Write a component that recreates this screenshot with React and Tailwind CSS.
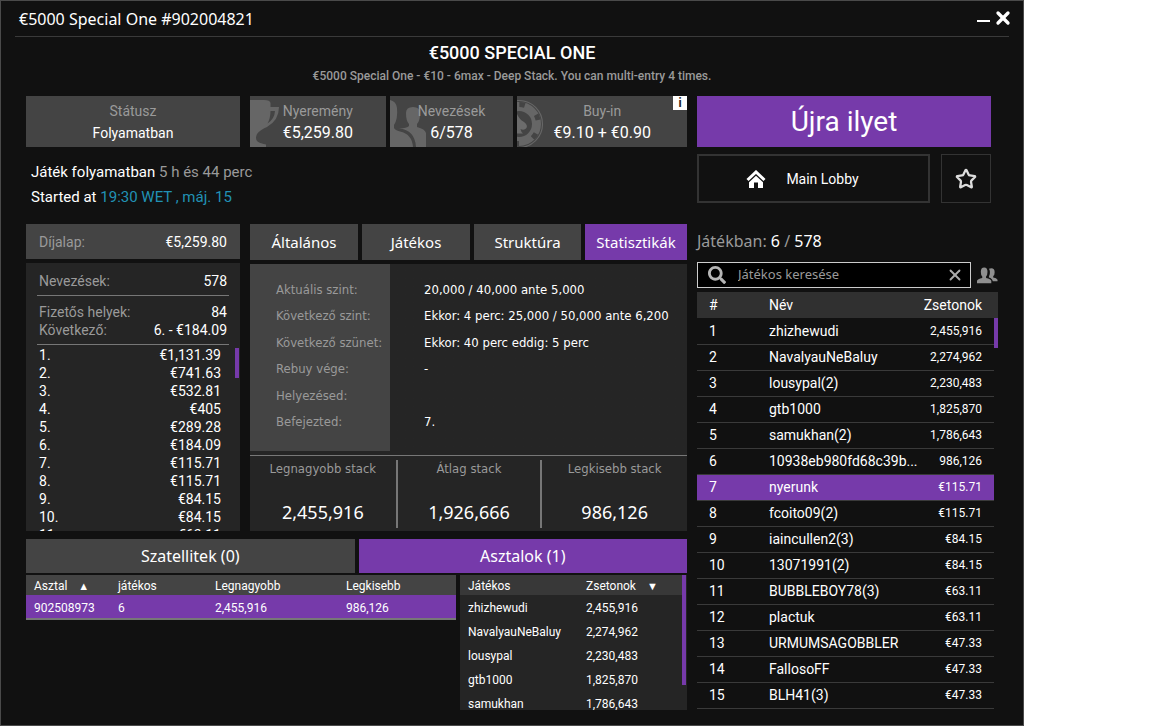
import { useState } from 'react'
import { FaSearch } from 'react-icons/fa'
import { Star, X } from 'lucide-react'

const TABS = ['Általános', 'Játékos', 'Struktúra', 'Statisztikák']

const PRIZES = [
  '€1,131.39',
  '€741.63',
  '€532.81',
  '€405',
  '€289.28',
  '€184.09',
  '€115.71',
  '€115.71',
  '€84.15',
  '€84.15',
  '€63.11',
]

const LEVELS = [
  ['Aktuális szint:', '20,000 / 40,000 ante 5,000'],
  ['Következő szint:', 'Ekkor: 4 perc: 25,000 / 50,000 ante 6,200'],
  ['Következő szünet:', 'Ekkor: 40 perc eddig: 5 perc'],
  ['Rebuy vége:', '-'],
  ['Helyezésed:', ''],
  ['Befejezted:', '7.'],
]

const STACKS = [
  ['Legnagyobb stack', '2,455,916'],
  ['Átlag stack', '1,926,666'],
  ['Legkisebb stack', '986,126'],
]

const TABLE_PLAYERS = [
  ['zhizhewudi', '2,455,916'],
  ['NavalyauNeBaluy', '2,274,962'],
  ['lousypal', '2,230,483'],
  ['gtb1000', '1,825,870'],
  ['samukhan', '1,786,643'],
]

const PLAYERS = [
  ['zhizhewudi', '2,455,916'],
  ['NavalyauNeBaluy', '2,274,962'],
  ['lousypal(2)', '2,230,483'],
  ['gtb1000', '1,825,870'],
  ['samukhan(2)', '1,786,643'],
  ['10938eb980fd68c39b...', '986,126'],
  ['nyerunk', '€115.71'],
  ['fcoito09(2)', '€115.71'],
  ['iaincullen2(3)', '€84.15'],
  ['13071991(2)', '€84.15'],
  ['BUBBLEBOY78(3)', '€63.11'],
  ['plactuk', '€63.11'],
  ['URMUMSAGOBBLER', '€47.33'],
  ['FallosoFF', '€47.33'],
  ['BLH41(3)', '€47.33'],
]

function TrophyArt() {
  return (
    <svg viewBox="0 0 40 51" className="absolute top-0 left-0 h-full" fill="#666" aria-hidden="true">
      <path
        fillRule="evenodd"
        d="M0 4H14Q20 4 20.5 7V11H29Q29 24 17 31Q10 34 7 38Q5 42 7 45Q9 47 16 48.500V51H0ZM20.500 15Q20.500 22 17.500 27.500Q24.500 23 25 15Z"
      />
    </svg>
  )
}

function PeopleArt() {
  return (
    <svg viewBox="0 0 40 51" className="absolute top-0 left-0 h-full" fill="#666" aria-hidden="true">
      <path d="M0 4Q6 5 7 12Q8 23 4 29V32Q5 34 10 35.500Q22 38 23 51H0Z" />
      <path d="M23 11Q30 11 30 17Q30 25 27 28V31Q35 33 36 37V51H26Q25 34 9 32.500Q17 32 19 30V28Q16 25 16 17Q16 11 23 11Z" />
    </svg>
  )
}

function ChipArt() {
  return (
    <svg viewBox="0 0 40 51" className="absolute top-0 left-0 h-full" fill="none" aria-hidden="true">
      <circle cx="2" cy="28" r="23.500" stroke="#666" strokeWidth="1.200" />
      <circle cx="2" cy="28" r="17.500" stroke="#666" strokeWidth="9" />
      <circle cx="2" cy="28" r="19.500" stroke="#444" strokeWidth="5" strokeDasharray="5.500 14.920" strokeDashoffset="-10" />
      <path
        fill="#6c6c6c"
        d="M0 18Q2 23 7 26Q11 29 9.500 32Q7 35 3.500 33Q4 36 6 37.500H0Z"
      />
    </svg>
  )
}

function HomeIcon() {
  return (
    <svg viewBox="0 0 20 18" className="h-[18px] w-5" aria-hidden="true">
      <path d="M1.500 10L10 2L18.500 10" fill="none" stroke="#fff" strokeWidth="3" />
      <path d="M10 5.800L17 12.200V18H12V12.500H8V18H3V12.200Z" fill="#fff" />
    </svg>
  )
}

function UsersIcon() {
  return (
    <svg viewBox="0 0 22 17" className="h-[17px] w-[21px]" fill="#8f8f8f" aria-hidden="true">
      <path d="M7.500 0Q11 0 11 4.500Q11 8 9.500 9.500V11Q14.500 12 15 14V16.500H0V14Q0.500 12 5.500 11V9.500Q4 8 4 4.500Q4 0 7.500 0Z" />
      <path d="M12.500 1.500Q13.500 1 15 1Q18.500 1 18.500 5Q18.500 8 17 9V10.500Q20.500 11 21.500 13V14.500H16.500Q16 11.500 12.500 10.500V9.500Q13.800 7 13.500 4.500Q13.500 3 12.500 1.500Z" />
    </svg>
  )
}

function StatBox({ label, value, art, children }) {
  return (
    <div className="relative flex h-[51px] flex-col justify-center bg-[#444] text-center">
      {art}
      <div className="relative text-sm leading-[22px] text-[#9a9a9a]">{label}</div>
      <div className={`relative leading-[22px] text-white ${art ? 'text-base' : 'text-sm'}`}>{value}</div>
      {children}
    </div>
  )
}

function TitleBar() {
  return (
    <header className="mx-3.5 flex h-9 items-center justify-between border-b border-[#3a3a3a] pl-1">
      <h1 className="font-['Noto_Sans',sans-serif] text-base text-white">€5000 Special One #902004821</h1>
      <div className="-mr-1 flex items-center pb-0.5">
        <button type="button" aria-label="Minimize" className="flex h-5 w-5 items-end justify-center pb-1.5">
          <span className="h-0.5 w-[13px] bg-white" />
        </button>
        <button type="button" aria-label="Close">
          <X className="h-5 w-5 text-white" strokeWidth={4} />
        </button>
      </div>
    </header>
  )
}

function PrizePanel() {
  return (
    <section className="flex w-[214px] shrink-0 flex-col gap-1 text-sm">
      <div className="flex h-[35px] items-center justify-between bg-[#444] px-[13px]">
        <span className="text-[#9a9a9a]">Díjalap:</span>
        <span className="text-white">€5,259.80</span>
      </div>
      <div className="flex h-[268px] flex-col overflow-hidden bg-[#252525] text-white">
        <dl className="mx-[11px] border-b border-[#777] px-0.5">
          <div className="flex h-8 items-center justify-between pt-1">
            <dt className="text-[#9a9a9a]">Nevezések:</dt>
            <dd>578</dd>
          </div>
        </dl>
        <dl className="mx-[11px] border-b border-[#777] px-0.5 pt-[7px] pb-[5px] leading-[18px]">
          <div className="flex justify-between">
            <dt className="text-[#9a9a9a]">Fizetős helyek:</dt>
            <dd>84</dd>
          </div>
          <div className="flex justify-between">
            <dt className="text-[#9a9a9a]">Következő:</dt>
            <dd>6. - €184.09</dd>
          </div>
        </dl>
        <div className="flex min-h-0 flex-1 items-start pt-px">
          <ol className="flex-1 pr-3.5 pl-[13px] leading-[18px]">
            {PRIZES.map((prize, i) => (
              <li key={i} className="flex justify-between">
                <span>{i + 1}.</span>
                <span>{prize}</span>
              </li>
            ))}
          </ol>
          <div className="mt-0.5 mr-px h-[30px] w-1 bg-[#763aaa]" />
        </div>
      </div>
    </section>
  )
}

function StatsPanel() {
  const [tab, setTab] = useState('Statisztikák')

  return (
    <section className="flex min-w-0 flex-1 flex-col gap-1 font-['Noto_Sans',sans-serif]">
      <nav className="grid grid-cols-[108fr_108fr_107fr_102fr] gap-1">
        {TABS.map((name) => (
          <button
            key={name}
            type="button"
            onClick={() => setTab(name)}
            className={`h-9 text-[15px] text-white ${name === tab ? 'bg-[#763aaa]' : 'bg-[#444]'}`}
          >
            {name}
          </button>
        ))}
      </nav>
      <div className="bg-[#252525]">
        <dl className="flex h-[187px] flex-col bg-linear-to-r from-[#444] from-[140px] to-[#252525] to-[140px] pt-3 pb-4 font-['DejaVu_Sans_Condensed',sans-serif] text-[13px]">
          {LEVELS.map(([label, value]) => (
            <div key={label} className="flex flex-1 items-center">
              <dt className="w-[174px] shrink-0 pl-[26px] text-[#9a9a9a]">{label}</dt>
              <dd className="text-white">{value}</dd>
            </div>
          ))}
        </dl>
        <div className="mt-1 grid grid-cols-[148fr_145fr_145fr] divide-x-2 divide-[#777] border-t border-[#777] pt-1 pb-[3px] text-center">
          {STACKS.map(([label, value]) => (
            <div key={label} className="h-[68px]">
              <div className="font-['DejaVu_Sans_Condensed',sans-serif] text-[13px] leading-[18px] text-[#9a9a9a]">
                {label}
              </div>
              <div className="pt-[22px] text-lg leading-6 text-white">{value}</div>
            </div>
          ))}
        </div>
      </div>
    </section>
  )
}

function TablesPanel() {
  return (
    <section>
      <nav className="grid grid-cols-2 gap-1 font-['Noto_Sans',sans-serif] text-base text-white">
        <button type="button" className="h-[34px] bg-[#444]">Szatellitek (0)</button>
        <button type="button" className="h-[34px] bg-[#763aaa]">Asztalok (1)</button>
      </nav>
      <div className="mt-0.5 flex items-start gap-1 text-xs text-white">
        <table className="flex-1 table-fixed border-b-2 border-[#777] text-left [&_td]:pt-0.5 [&_th]:pt-0.5">
          <thead className="bg-[#444]">
            <tr className="h-5">
              <th className="w-[84px] pl-2 font-normal">
                Asztal <span className="pl-2 text-[11px] leading-3">▲</span>
              </th>
              <th className="w-[97px] pl-2 font-normal">játékos</th>
              <th className="w-[131px] pl-2 font-normal">Legnagyobb</th>
              <th className="pl-2 font-normal">Legkisebb</th>
            </tr>
          </thead>
          <tbody className="bg-[#763aaa]">
            <tr className="h-6">
              <td className="pl-2">902508973</td>
              <td className="pl-2">6</td>
              <td className="pl-2">2,455,916</td>
              <td className="pl-2">986,126</td>
            </tr>
          </tbody>
        </table>
        <div className="flex h-[135px] w-[227px] items-start overflow-hidden bg-[#252525]">
          <table className="flex-1 table-fixed text-left [&_td]:pt-0.5 [&_th]:pt-0.5">
            <thead className="bg-[#383838]">
              <tr className="h-5">
                <th className="w-[118px] pl-2 font-normal">Játékos</th>
                <th className="pl-2 font-normal">
                  Zsetonok <span className="pl-2 text-[11px] leading-3">▼</span>
                </th>
              </tr>
            </thead>
            <tbody>
              {TABLE_PLAYERS.map(([name, chips]) => (
                <tr key={name} className="h-6">
                  <td className="pl-2">{name}</td>
                  <td className="pl-2">{chips}</td>
                </tr>
              ))}
            </tbody>
          </table>
          <div className="mr-px h-[110px] w-1 bg-[#763aaa]" />
        </div>
      </div>
    </section>
  )
}

function PlayerList() {
  return (
    <div className="flex items-start">
      <table className="min-w-0 flex-1 table-fixed text-sm text-white">
        <thead className="bg-[#303030] text-left">
          <tr className="h-[26px]">
            <th className="w-[60px] pl-3 font-normal">#</th>
            <th className="pl-3 font-normal">Név</th>
            <th className="w-[74px] pr-3 text-right font-normal">Zsetonok</th>
          </tr>
        </thead>
        <tbody>
          {PLAYERS.map(([name, chips], i) => (
            <tr
              key={name}
              className={`h-[26px] border-b border-[#3a3a3a] ${name === 'nyerunk' ? 'bg-[#763aaa]' : ''}`}
            >
              <td className="pl-3">{i + 1}</td>
              <td className="truncate pl-3">{name}</td>
              <td className="pr-3 text-right text-xs">{chips}</td>
            </tr>
          ))}
        </tbody>
      </table>
      <div className="h-14 w-1 bg-linear-to-b from-[#303030] from-[26px] to-[#763aaa] to-[26px]" />
    </div>
  )
}

function Sidebar() {
  const [query, setQuery] = useState('')

  return (
    <aside className="w-[301px] shrink-0">
      <div className="mr-[7px]">
        <button type="button" className="h-[51px] w-full bg-[#763aaa] text-[28px] text-white">
          Újra ilyet
        </button>
        <div className="mt-[7px] flex gap-[11px]">
          <button
            type="button"
            className="flex h-[49px] flex-1 items-center justify-center gap-5 border-2 border-[#333] pr-[22px] text-sm text-white"
          >
            <HomeIcon />
            Main Lobby
          </button>
          <button
            type="button"
            aria-label="Kedvenc"
            className="flex h-[49px] w-[50px] items-center justify-center border border-[#333]"
          >
            <Star className="h-[22px] w-[22px] text-[#ddd]" strokeWidth={2.5} />
          </button>
        </div>
      </div>
      <p className="mt-[26px] font-['Noto_Sans',sans-serif] text-base leading-6 text-[#9a9a9a]">
        Játékban: <span className="text-white">6</span> / <span className="text-white">578</span>
      </p>
      <div className="mt-[9px] mb-1 flex items-center gap-1.5">
        <div className="flex h-[26px] min-w-0 flex-1 items-center border border-[#ccc] bg-black px-2.5">
          <FaSearch className="h-[18px] w-[18px] shrink-0 text-[#b5b5b5]" />
          <input
            type="text"
            aria-label="Játékos keresése"
            placeholder="Játékos keresése"
            value={query}
            onChange={(e) => setQuery(e.target.value)}
            className="min-w-0 flex-1 bg-transparent px-3 font-['Noto_Sans',sans-serif] text-[13px] text-white outline-none placeholder:text-[#9a9a9a]"
          />
          <button type="button" aria-label="Törlés" onClick={() => setQuery('')}>
            <X className="-mr-1 h-[18px] w-[18px] text-[#aaa]" strokeWidth={2.5} />
          </button>
        </div>
        <button type="button" aria-label="Barátok">
          <UsersIcon />
        </button>
      </div>
      <PlayerList />
    </aside>
  )
}

export default function App() {
  return (
    <div className="min-h-screen bg-white">
      <div className="min-h-screen w-full max-w-5xl border border-[#4a4a4a] bg-[#111] font-['Roboto',sans-serif]">
        <TitleBar />
        <div className="pt-1 pb-2.5 text-center">
          <h2 className="mb-0.5 text-lg leading-6 font-medium text-white">€5000 SPECIAL ONE</h2>
          <p className="text-xs leading-[19px] font-medium text-[#9a9a9a]">
            €5000 Special One - €10 - 6max - Deep Stack. You can multi-entry 4 times.
          </p>
        </div>
        <main className="flex items-start gap-2.5 px-[25px]">
          <div className="min-w-0 flex-1">
            <div className="flex gap-2.5">
              <div className="w-[214px] shrink-0">
                <StatBox label="Státusz" value="Folyamatban" />
              </div>
              <div className="grid flex-1 grid-cols-[136fr_124fr_170fr] gap-1">
                <StatBox label="Nyeremény" value="€5,259.80" art={<TrophyArt />} />
                <StatBox label="Nevezések" value="6/578" art={<PeopleArt />} />
                <StatBox label="Buy-in" value="€9.10 + €0.90" art={<ChipArt />}>
                  <button
                    type="button"
                    aria-label="Információ"
                    className="absolute top-0 right-0 h-3.5 w-3.5 bg-white text-xs leading-[14px] font-bold text-[#222]"
                  >
                    i
                  </button>
                </StatBox>
              </div>
            </div>
            <div className="px-[5px] pt-[13px] pb-3.5 text-[15px] leading-[25px] text-white">
              <p>
                Játék folyamatban <span className="text-[#9a9a9a]">5 h és 44 perc</span>
              </p>
              <p>
                Started at <span className="text-[#2191b5]">19:30 WET , máj. 15</span>
              </p>
            </div>
            <div className="mb-2 flex items-start gap-2.5">
              <PrizePanel />
              <StatsPanel />
            </div>
            <TablesPanel />
          </div>
          <Sidebar />
        </main>
      </div>
    </div>
  )
}
